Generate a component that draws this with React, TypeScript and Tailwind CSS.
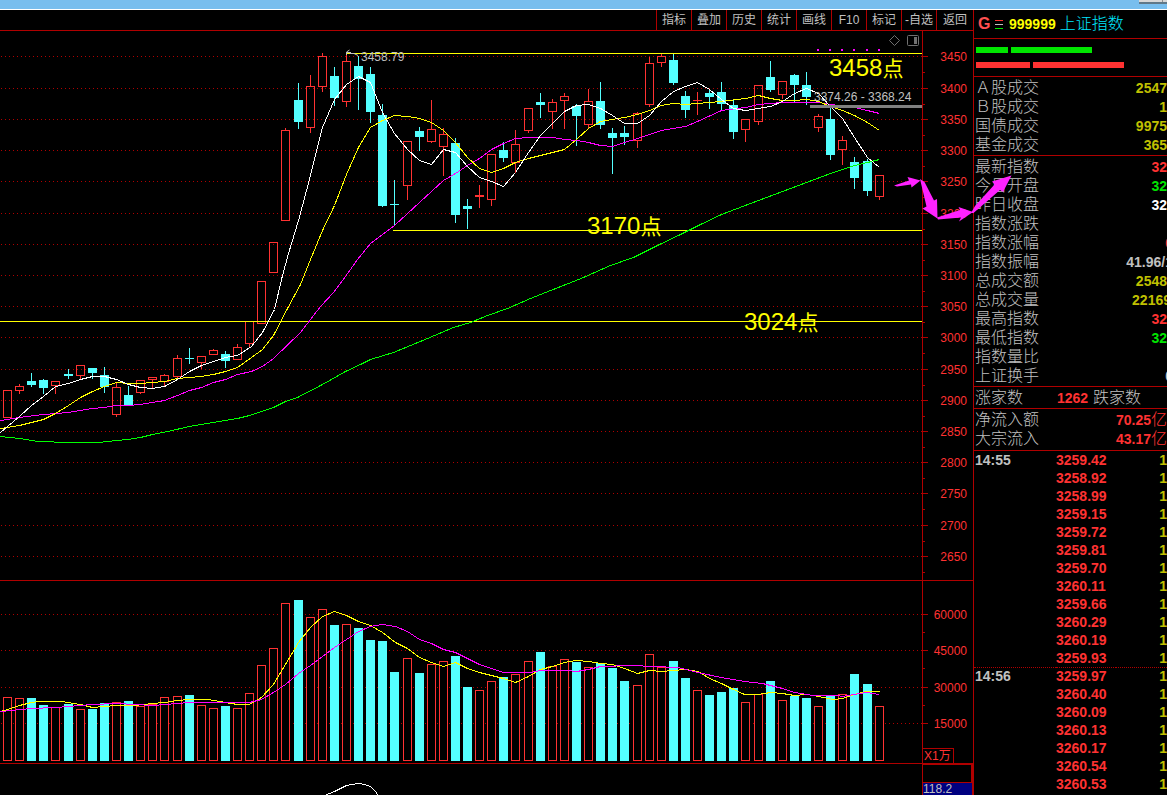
import React from "react";

type Candle = ["r" | "c", number, number, number, number, number];

// [direction, high, body top, body bottom, low, volume top]
const CANDLES: Candle[] = [
  ["r", 390, 390, 418, 418, 697], ["r", 384, 386, 391, 394, 698], ["c", 373, 381, 385, 386, 698],
  ["c", 379, 380, 388, 393, 705], ["r", 381, 381, 386, 394, 707], ["c", 369, 374, 376, 378, 704],
  ["r", 365, 365, 376, 379, 709], ["c", 368, 368, 373, 378, 709], ["c", 367, 375, 387, 392, 703],
  ["r", 382, 387, 415, 417, 702], ["c", 386, 395, 405, 405, 701], ["r", 380, 380, 393, 394, 706],
  ["r", 377, 377, 380, 388, 704], ["r", 374, 375, 382, 387, 697], ["r", 355, 358, 377, 379, 696],
  ["c", 348, 358, 359, 363, 695], ["r", 356, 356, 363, 369, 705], ["r", 349, 350, 355, 355, 708],
  ["c", 351, 354, 361, 367, 706], ["r", 344, 347, 360, 360, 708], ["r", 321, 321, 344, 347, 693],
  ["r", 281, 281, 324, 324, 665], ["r", 242, 242, 273, 273, 648], ["r", 128, 130, 221, 221, 603],
  ["c", 83, 100, 122, 128, 600], ["r", 75, 86, 128, 133, 617], ["r", 53, 56, 87, 92, 609],
  ["c", 67, 76, 98, 105, 625], ["r", 53, 61, 102, 107, 624], ["c", 56, 66, 79, 109, 628],
  ["c", 67, 74, 112, 122, 640], ["c", 104, 115, 206, 206, 641], ["c", 180, 204, 205, 224, 672],
  ["r", 141, 141, 186, 200, 658], ["c", 127, 131, 137, 150, 673], ["r", 100, 129, 142, 143, 664],
  ["r", 128, 134, 147, 176, 661], ["c", 138, 143, 215, 222, 656], ["c", 199, 206, 209, 228, 687],
  ["r", 185, 195, 197, 207, 690], ["r", 154, 154, 200, 206, 681], ["c", 142, 150, 158, 161, 677],
  ["r", 130, 144, 163, 173, 674], ["r", 108, 108, 131, 133, 661], ["c", 93, 102, 105, 117, 652],
  ["r", 99, 102, 112, 129, 666], ["r", 93, 96, 101, 129, 659], ["c", 104, 106, 116, 145, 662],
  ["r", 89, 101, 125, 128, 667], ["c", 82, 101, 125, 128, 663], ["c", 128, 133, 138, 173, 668],
  ["c", 126, 133, 137, 144, 681], ["r", 112, 113, 141, 148, 685], ["r", 57, 63, 105, 107, 654],
  ["r", 54, 56, 63, 67, 667], ["c", 53, 60, 83, 84, 661], ["c", 91, 96, 110, 117, 678],
  ["r", 92, 100, 101, 114, 690], ["c", 90, 93, 97, 108, 695], ["c", 82, 92, 104, 110, 692],
  ["c", 100, 105, 132, 138, 688], ["r", 119, 119, 130, 142, 702], ["r", 85, 85, 122, 125, 694],
  ["c", 61, 77, 90, 91, 681], ["r", 81, 81, 95, 99, 700], ["c", 74, 75, 85, 102, 696],
  ["c", 72, 85, 97, 104, 698], ["r", 114, 116, 128, 132, 706], ["c", 107, 119, 155, 159, 696],
  ["r", 136, 140, 150, 165, 694], ["c", 157, 162, 178, 188, 674], ["c", 159, 161, 191, 195, 684],
  ["r", 175, 175, 197, 200, 706],
];

const candleX = (i: number) => 7 + 12 * i + Math.floor((2 * i + 10) / 19);

const MA_WHITE =
  "0,432 7,426 19,416 31,405 43,396 55,386 68,383 80,379 92,376 104,376 116,379 128,384 140,387 152,388 164,386 177,379 189,371 201,365 213,361 225,357 237,355 251,346 262,332 274,309 282,275 288,253 298,220 310,175 322,127 334,99 346,84 358,76 370,82 382,112 394,133 407,149 419,160 431,164 443,149 455,152 467,166 479,177 491,181 503,186 515,172 528,152 540,135 552,123 564,111 576,105 588,104 600,108 612,115 624,123 637,123 649,115 661,101 673,91 685,86 697,82 709,89 721,99 733,108 745,110 758,108 770,106 782,101 794,93 806,88 818,93 830,106 842,118 854,137 867,157 879,167";
const MA_YELLOW =
  "0,428 19,425 31,422 43,419 55,413 68,405 80,397 92,391 104,386 116,382 128,383 140,383 152,382 164,381 177,378 189,377 201,376 213,374 225,371 237,367 251,357 262,349 273,335 287,308 300,284 310,259 322,230 334,205 346,174 358,147 370,127 382,120 394,115 407,116 419,118 431,122 443,130 455,142 467,157 479,168 491,172 503,168 515,162 528,158 540,155 564,149 576,139 588,128 600,121 612,119 624,117 637,114 649,110 661,105 673,103 685,104 709,102 721,101 745,98 758,95 770,98 782,100 794,100 806,99 818,101 830,106 842,110 854,115 867,122 879,130";
const MA_MAGENTA =
  "0,420 19,417 43,414 68,412 80,410 92,408 104,407 116,405 128,405 140,404 152,402 164,400 177,395 189,390 201,387 213,382 225,379 237,374 251,371 262,366 273,358 300,332 320,306 333,292 345,276 357,259 370,243 394,225 419,202 443,180 455,173 467,165 479,158 491,149 503,143 515,138 528,137 552,137 564,139 576,140 588,142 600,145 612,146 624,142 637,138 661,130 685,126 697,121 721,110 745,107 758,104 782,102 818,102 830,104 854,107 867,110 879,113";
const MA_GREEN =
  "0,436 19,438 38,441 68,442 98,442 116,440 128,439 140,437 152,434 167,431 189,426 213,422 237,418 249,415 273,407 285,401 297,397 322,384 345,371 360,364 370,359 393,352 427,338 453,327 470,322 487,315 507,308 530,298 583,277 610,265 633,257 657,245 680,234 700,224 721,214 758,200 806,182 830,173 854,165 867,162 879,159";
const VOL_YELLOW =
  "0,711 7,709 19,705 31,702 38,701 61,701 80,704 92,707 104,706 116,705 134,705 152,703 164,702 177,700 189,699 207,699 225,702 237,704 249,704 261,697 273,684 285,664 298,642 310,627 322,616 334,611 346,615 358,621 370,625 382,632 395,642 407,648 419,657 431,662 443,666 455,662 467,668 479,672 491,675 503,678 515,682 528,676 540,669 552,666 564,662 576,660 588,661 600,663 612,664 624,668 637,673 649,670 661,671 685,669 698,671 709,678 721,683 733,689 744,694 758,694 770,692 782,693 794,695 806,694 818,696 833,699 842,698 854,694 866,691 879,691";
const VOL_MAGENTA =
  "0,711 31,708 55,707 80,705 92,704 116,703 152,705 177,703 189,702 249,702 261,699 273,692 285,684 298,673 310,665 322,656 334,647 346,639 358,631 370,626 382,624 395,626 407,631 419,639 431,643 443,649 455,652 467,658 479,664 503,672 530,672 540,670 567,670 576,671 588,669 600,666 632,665 653,666 678,667 697,672 721,677 744,681 762,683 782,688 794,692 813,695 837,695 842,696 854,694 866,692 879,694";

const PRICE_TICKS = Array.from({ length: 17 }, (_, i) => ({
  value: 3450 - 50 * i,
  y: Math.round(56.4 + 31.22 * i),
}));
const VOLUME_TICKS = [
  { value: 60000, y: 614 },
  { value: 45000, y: 650 },
  { value: 30000, y: 687 },
  { value: 15000, y: 723 },
];

const MENU = ["指标", "叠加", "历史", "统计", "画线", "F10", "标记", "-自选", "返回"];

const TURNOVER = [
  { label: "Ａ股成交", value: "2547" },
  { label: "Ｂ股成交", value: "1" },
  { label: "国债成交", value: "9975" },
  { label: "基金成交", value: "365" },
];

const QUOTES = [
  { label: "最新指数", value: "32", tone: "text-[#ff3232]" },
  { label: "今日开盘", value: "32", tone: "text-[#00e600]" },
  { label: "昨日收盘", value: "32", tone: "text-white" },
  { label: "指数涨跌", value: "", tone: "" },
  { label: "指数涨幅", value: "0", tone: "text-[#ff3232] -mr-[6px]" },
  { label: "指数振幅", value: "41.96/1", tone: "text-[#c0c0c0] -mr-[6px]" },
  { label: "总成交额", value: "2548", tone: "text-[#c0c000]" },
  { label: "总成交量", value: "22169", tone: "text-[#c0c000] -mr-1" },
  { label: "最高指数", value: "32", tone: "text-[#ff3232]" },
  { label: "最低指数", value: "32", tone: "text-[#00e600]" },
  { label: "指数量比", value: "", tone: "" },
  { label: "上证换手", value: "0", tone: "text-[#c0c0c0] -mr-[6px]" },
];

const TRADES = [
  ["14:55", "3259.42"], ["", "3258.92"], ["", "3258.99"], ["", "3259.15"], ["", "3259.72"],
  ["", "3259.81"], ["", "3259.70"], ["", "3260.11"], ["", "3259.66"], ["", "3260.29"],
  ["", "3260.19"], ["", "3259.93"], ["14:56", "3259.97"], ["", "3260.40"], ["", "3260.09"],
  ["", "3260.13"], ["", "3260.17"], ["", "3260.54"], ["", "3260.53"],
];

function Line({ points, color }: { points: string; color: string }) {
  return (
    <polyline points={points} transform="translate(0.5 0.5)" fill="none" stroke={color} strokeWidth="1" shapeRendering="crispEdges" />
  );
}

function GridLines({ ys }: { ys: number[] }) {
  return (
    <>
      {ys.map((y) => (
        <line key={y} x1="1" x2="100%" y1={y + 0.5} y2={y + 0.5} stroke="#b00000" strokeDasharray="1 3" shapeRendering="crispEdges" />
      ))}
    </>
  );
}

function CandleMark({ i, candle }: { i: number; candle: Candle }) {
  const [kind, high, top, bottom, low] = candle;
  const x = candleX(i);
  if (kind === "c" || bottom - top < 3) {
    const fill = kind === "c" ? "#54ffff" : "#ff3232";
    return (
      <g fill={fill}>
        <rect x={x} y={high} width="1" height={low - high + 1} />
        <rect x={x - 4} y={top} width="9" height={Math.max(1, bottom - top)} />
      </g>
    );
  }
  return (
    <g fill="none" stroke="#ff3232">
      <path d={`M${x + 0.5} ${high}V${top}M${x + 0.5} ${bottom}V${low}`} />
      <rect x={x - 3.5} y={top + 0.5} width="8" height={bottom - top - 1} />
    </g>
  );
}

function PointLabel({ x, y, value }: { x: number; y: number; value: string }) {
  return (
    <text x={x} y={y} fill="#ffff00" fontSize="24">
      {value}
      <tspan fontSize="21">点</tspan>
    </text>
  );
}

function PriceChart() {
  return (
    <svg className="h-[549px] min-w-0 flex-1" role="img" aria-label="上证指数 K线">
      <g transform="translate(0 -31)">
        <GridLines ys={PRICE_TICKS.map((t) => t.y)} />
        <g shapeRendering="crispEdges">
          {CANDLES.map((c, i) => (
            <CandleMark key={i} i={i} candle={c} />
          ))}
          <rect x="346" y="53" width="100%" height="1" fill="#ffff00" />
          <rect x="393" y="230" width="100%" height="1" fill="#ffff00" />
          <rect x="0" y="321" width="100%" height="1" fill="#ffff00" />
        </g>
        <Line points={MA_GREEN} color="#00ff00" />
        <Line points={MA_MAGENTA} color="#ff00ff" />
        <Line points={MA_YELLOW} color="#ffff00" />
        <Line points={MA_WHITE} color="#ffffff" />
        <rect x="810" y="105" width="100%" height="3" fill="#808080" />
        {[818, 830, 842, 854, 867, 879].map((x) => (
          <rect key={x} x={x - 1} y="49" width="2" height="2" fill="#ff00ff" />
        ))}
        <path d="M346 52.5h5M346.5 55v-3l3-2M350 53.5h4l4 2" stroke="#c0c0c0" fill="none" />
        <text x="361" y="61" fontSize="12" fill="#c0c0c0">3458.79</text>
        <text x="814" y="101" fontSize="12" fill="#c0c0c0">3374.26 - 3368.24</text>
        <PointLabel x={829} y={76} value="3458" />
        <PointLabel x={587} y={234} value="3170" />
        <PointLabel x={744} y={330} value="3024" />
        <path d="M894.5 35.5l5 5-5 5-5-5z" fill="none" stroke="#707070" />
        <rect x="907.5" y="35.5" width="11" height="10" rx="1" fill="none" stroke="#707070" />
        <rect x="914" y="37" width="3" height="7" fill="#707070" />
      </g>
    </svg>
  );
}

function PriceAxis() {
  return (
    <svg className="h-[549px] w-[51px] shrink-0 border-l border-[#b00000]" role="img" aria-label="指数坐标">
      <g transform="translate(0 -31)">
        {PRICE_TICKS.map((t) => (
          <g key={t.value}>
            <rect x="0" y={t.y} width="5" height="1" fill="#b00000" />
            <rect x="0" y={t.y + 16} width="2" height="1" fill="#b00000" />
            <text x="44" y={t.y + 5} fontSize="12" textAnchor="end" fill="#ff3232">{t.value}</text>
          </g>
        ))}
      </g>
    </svg>
  );
}

function VolumeChart() {
  return (
    <svg className="h-[182px] min-w-0 flex-1" role="img" aria-label="成交量">
      <g transform="translate(0 -581)">
        <GridLines ys={VOLUME_TICKS.map((t) => t.y)} />
        <g shapeRendering="crispEdges">
          {CANDLES.map((c, i) =>
            c[0] === "c" ? (
              <rect key={i} x={candleX(i) - 4} y={c[5]} width="9" height={761 - c[5]} fill="#54ffff" />
            ) : (
              <rect key={i} x={candleX(i) - 3.5} y={c[5] + 0.5} width="8" height={760 - c[5]} fill="#000000" stroke="#ff3232" />
            ),
          )}
        </g>
        <Line points={VOL_YELLOW} color="#ffff00" />
        <Line points={VOL_MAGENTA} color="#ff00ff" />
      </g>
    </svg>
  );
}

function VolumeAxis() {
  return (
    <div className="flex h-[182px] w-[51px] shrink-0 flex-col border-l border-[#b00000]">
      <svg className="h-[167px] w-full" role="img" aria-label="成交量坐标">
        <g transform="translate(0 -581)">
          {VOLUME_TICKS.map((t) => (
            <g key={t.value}>
              <rect x="0" y={t.y} width="5" height="1" fill="#b00000" />
              {t.value > 15000 && <rect x="0" y={t.y + 18} width="2" height="1" fill="#b00000" />}
              <text x="44" y={t.y + 5} fontSize="12" textAnchor="end" fill="#ff3232">{t.value}</text>
            </g>
          ))}
        </g>
      </svg>
      <div className="h-[15px] w-[31px] border-t border-r border-[#b00000] pl-px text-xs leading-[15px] whitespace-nowrap text-[#ff3232]">
        X1万
      </div>
    </div>
  );
}

function TrendArrows() {
  return (
    <svg className="pointer-events-none absolute top-[170px] right-[154px] h-[54px] w-[120px]" viewBox="893 170 120 54" aria-hidden="true">
      <g fill="#ff22ff">
        <path d="M894 185.5L909 180.5L907.5 177L920.5 180.5L911.5 187.5L911 184.5L897 186.5z" />
        <path d="M920 179L924.5 182L934 200.5L937 199L937.5 218.5L922.5 208.5L926.5 206.5z" />
        <path d="M937 217.5L960 210L958.5 207L973 212L959 221.5L961 217.5L938 219.5z" />
        <path d="M971 213L975 206L994.5 184.5L992 181.5L1011.5 175.5L1003 192L1000 190L973.5 213z" />
      </g>
    </svg>
  );
}

function IndexPanel() {
  return (
    <aside className="w-[194px] shrink-0 overflow-hidden border-l border-[#b00000] whitespace-nowrap text-[#c0c0c0]">
      <h1 className="flex h-[29px] items-center border-b border-[#b00000] pl-1 text-sm">
        <span className="w-[17px] text-base font-bold text-[#ff5050]">G</span>
        <svg className="mr-[6px] h-[9px] w-2" aria-hidden="true" shapeRendering="crispEdges">
          <rect width="8" height="1" fill="#ff3232" />
          <rect y="4" width="8" height="1" fill="#c0c0c0" />
          <rect y="8" width="8" height="1" fill="#00e600" />
        </svg>
        <span className="mr-1 font-bold text-[#ffff00]">999999</span>
        <span className="text-base font-light text-[#00e6ff]">上证指数</span>
      </h1>
      <div className="flex h-[38px] flex-col gap-[9px] border-b border-[#b00000] pt-2 pl-0.5">
        <div className="flex h-[6px] gap-[3px]">
          <i className="w-8 bg-[#00e600]" />
          <i className="w-[81px] bg-[#00e600]" />
        </div>
        <div className="flex h-[6px] gap-[3px]">
          <i className="w-[54px] bg-[#ff3232]" />
          <i className="w-[91px] bg-[#ff3232]" />
        </div>
      </div>
      <dl className="border-b border-[#b00000] pt-px pb-px">
        {TURNOVER.map((row) => (
          <div key={row.label} className="flex h-[19px] items-center justify-between pl-px">
            <dt className="text-base leading-[19px] font-light">{row.label}</dt>
            <dd className="text-sm leading-4 font-bold text-[#c0c000]">{row.value}</dd>
          </div>
        ))}
      </dl>
      <dl className="border-b border-[#b00000] pt-px pb-px">
        {QUOTES.map((row) => (
          <div key={row.label} className="flex h-[19px] items-center justify-between pl-px">
            <dt className="text-base leading-[19px] font-light">{row.label}</dt>
            <dd className={`text-sm leading-4 font-bold ${row.tone}`}>{row.value}</dd>
          </div>
        ))}
      </dl>
      <div className="flex h-[22px] items-center border-b border-[#b00000] pl-px text-base font-light">
        <span className="w-[82px]">涨家数</span>
        <b className="w-9 text-sm leading-4 font-bold text-[#ff3232]">1262</b>
        <span>跌家数</span>
      </div>
      <dl className="border-b border-[#b00000] pt-px pb-0.5">
        {[["净流入额", "70.25"], ["大宗流入", "43.17"]].map(([label, value]) => (
          <div key={label} className="flex h-[19px] items-center justify-between pl-px">
            <dt className="text-base leading-[19px] font-light">{label}</dt>
            <dd className="flex items-center text-[#ff3232]">
              <b className="text-sm leading-4 font-bold">{value}</b>
              <span className="text-base leading-[19px] font-light">亿</span>
            </dd>
          </div>
        ))}
      </dl>
      <table className="w-full table-fixed border-separate border-spacing-0 text-sm leading-[17px] font-bold">
        <tbody>
          {TRADES.map(([time, price], i) => (
            <tr key={i} className="h-[18px]">
              <td className={`w-[82px] border-t border-dotted p-0 pl-px ${time && i ? "border-[#b00000]" : "border-transparent"}`}>{time}</td>
              <td className={`w-[60px] border-t border-dotted p-0 text-[#ff3232] ${time && i ? "border-[#b00000]" : "border-transparent"}`}>{price}</td>
              <td className={`border-t border-dotted p-0 text-right text-[#c0c000] ${time && i ? "border-[#b00000]" : "border-transparent"}`}>1</td>
            </tr>
          ))}
        </tbody>
      </table>
    </aside>
  );
}

export default function App() {
  return (
    <div className="relative min-h-screen overflow-hidden bg-black font-['Liberation_Sans','Noto_Sans_CJK_SC',sans-serif]">
      <header className="flex h-[10px] items-start justify-end border-b border-white bg-[#78beee]">
        <div className="flex h-1 w-[28px] justify-end border-b-2 border-[#607888] bg-[#d8d8d8]">
          <i className="mr-1 w-px bg-[#909090]" />
        </div>
      </header>
      <div className="flex">
        <main className="min-w-0 flex-1">
          <nav className="flex h-[21px] justify-end border-b border-[#b00000]">
            {MENU.map((item) => (
              <button key={item} type="button" className="w-[35px] border-l border-[#b00000] text-center text-xs leading-5 whitespace-nowrap text-[#c0c0c0] last:w-[37px]">
                {item}
              </button>
            ))}
          </nav>
          <section className="flex border-b border-[#b00000]">
            <PriceChart />
            <PriceAxis />
          </section>
          <section className="flex border-b border-[#b00000]">
            <VolumeChart />
            <VolumeAxis />
          </section>
          <section className="flex h-[31px] overflow-hidden">
            <svg className="h-[31px] min-w-0 flex-1" aria-hidden="true">
              <g transform="translate(0 -764)">
                <Line points="320,797 324,795 334,791 346,785 352,784 358,783 364,784 370,786 375,791 378,796" color="#ffffff" />
              </g>
            </svg>
            <div className="flex w-[51px] shrink-0 flex-col border-r border-l border-[#b00000]">
              <div className="h-[19px] border-t border-r border-b border-[#b00000]" />
              <div className="h-3 bg-[#000080] text-xs leading-3 text-[#c0c0c0]">118.2</div>
            </div>
          </section>
        </main>
        <IndexPanel />
      </div>
      <TrendArrows />
    </div>
  );
}
